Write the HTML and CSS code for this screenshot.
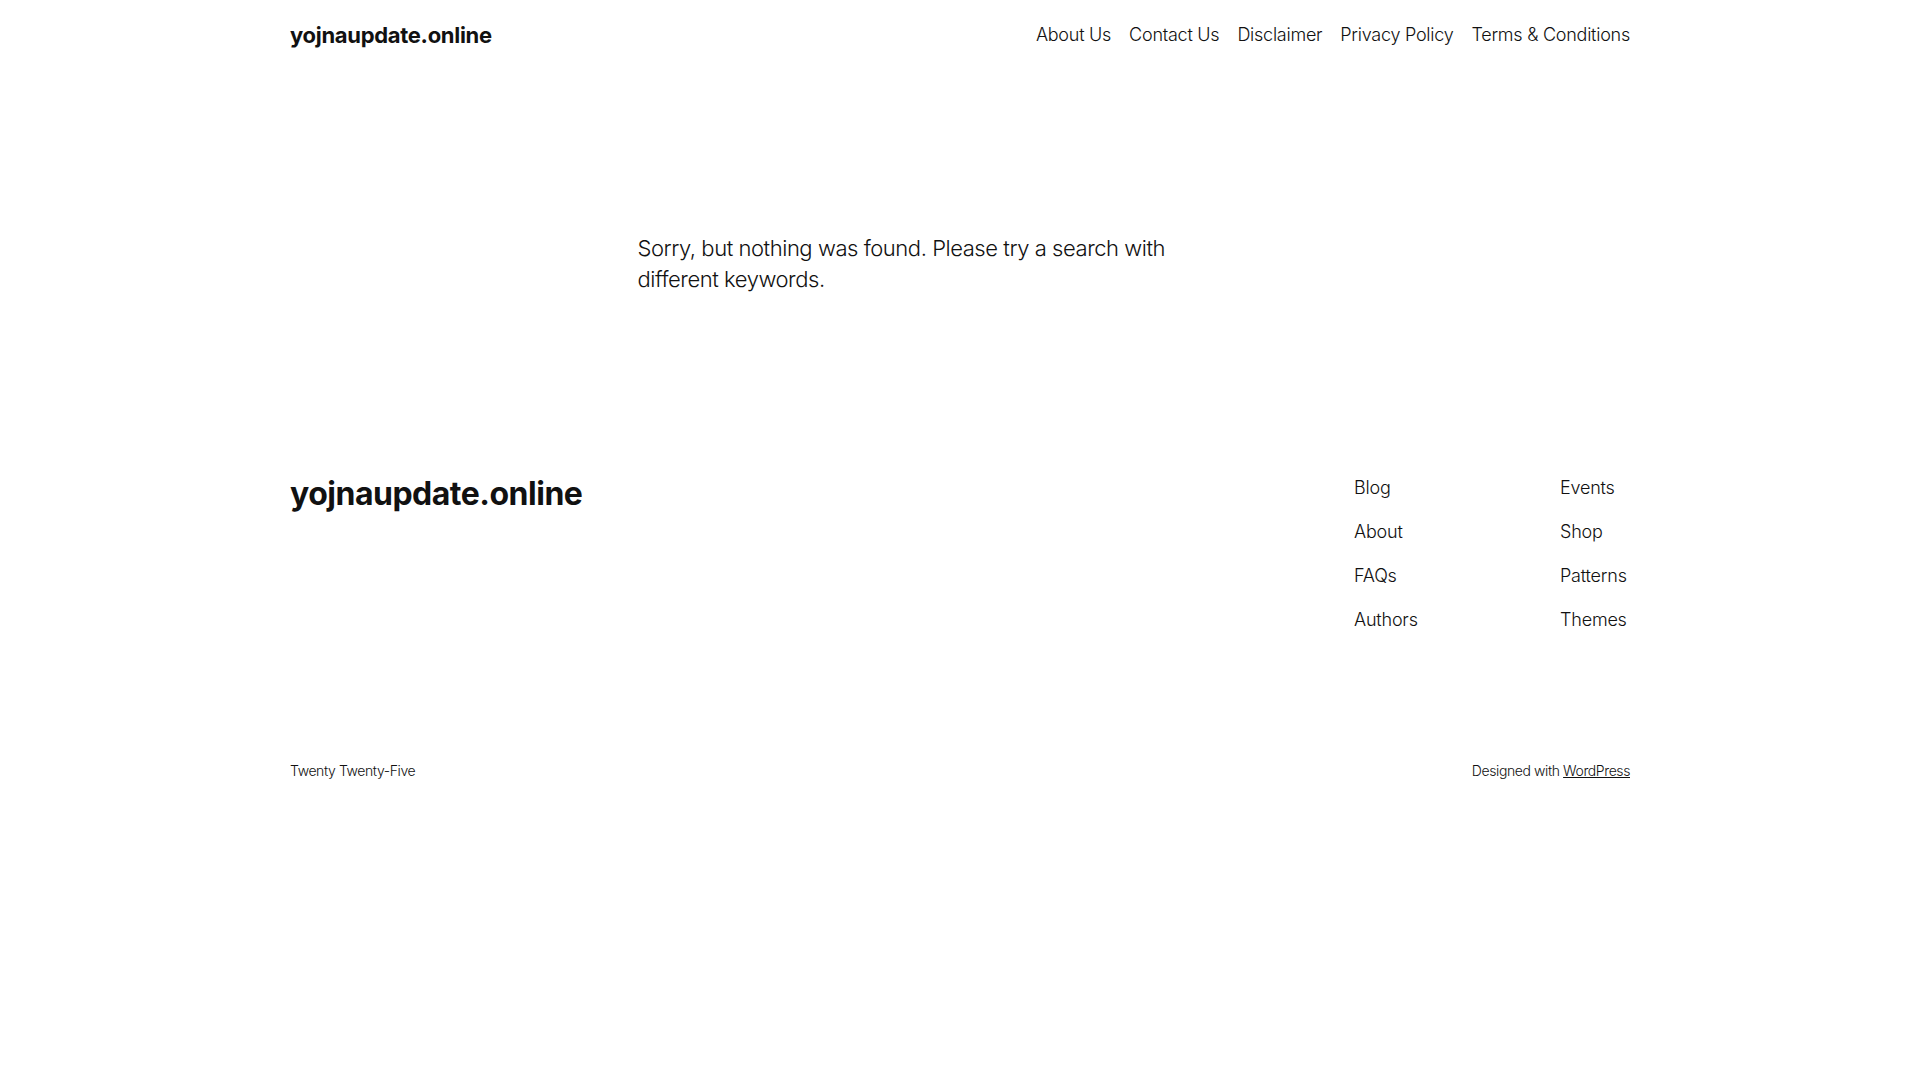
FILE: index.html
```html
<!DOCTYPE html>
<html lang="en">
<head>
<meta charset="utf-8">
<title>yojnaupdate.online</title>
<link rel="stylesheet" href="styles.css">
</head>
<body>
<header class="site-header">
  <a class="site-title" href="#">yojnaupdate.online</a>
  <nav class="main-nav">
    <a href="#">About Us</a>
    <a href="#">Contact Us</a>
    <a href="#">Disclaimer</a>
    <a href="#">Privacy Policy</a>
    <a href="#">Terms &amp; Conditions</a>
  </nav>
</header>
<main class="content">
  <p class="no-results">Sorry, but nothing was found. Please try a search with different keywords.</p>
</main>
<footer class="site-footer">
  <div class="footer-top">
    <a class="footer-title" href="#">yojnaupdate.online</a>
    <div class="footer-navs">
      <ul class="footer-col">
        <li><a href="#">Blog</a></li>
        <li><a href="#">About</a></li>
        <li><a href="#">FAQs</a></li>
        <li><a href="#">Authors</a></li>
      </ul>
      <ul class="footer-col">
        <li><a href="#">Events</a></li>
        <li><a href="#">Shop</a></li>
        <li><a href="#">Patterns</a></li>
        <li><a href="#">Themes</a></li>
      </ul>
    </div>
  </div>
  <div class="footer-bottom">
    <span>Twenty Twenty-Five</span>
    <span>Designed with <a class="wp-link" href="#">WordPress</a></span>
  </div>
</footer>
</body>
</html>
```
FILE: styles.css
```css
html, body {
  margin: 0;
  padding: 0;
  background: #ffffff;
}
body {
  font-family: Inter, "Noto Sans", sans-serif;
  color: #111111;
  font-weight: 300;
}
a {
  color: #111111;
  text-decoration: none;
}
.site-header {
  width: 1340px;
  margin: 0 auto;
  display: flex;
  justify-content: space-between;
  align-items: center;
  padding: 21px 0 19px;
}
.site-title {
  font-size: 22px;
  font-weight: 700;
  letter-spacing: -0.3px;
  line-height: 28px;
}
.main-nav {
  display: flex;
  gap: 18px;
  font-size: 18px;
  line-height: 28px;
  letter-spacing: -0.25px;
}
.content {
  width: 645px;
  margin: 0 auto;
  padding-top: 165px;
  padding-bottom: 179px;
}
.no-results {
  margin: 0;
  max-width: 560px;
  font-size: 22px;
  line-height: 31px;
  letter-spacing: -0.45px;
}
.site-footer {
  width: 1340px;
  margin: 0 auto;
}
.footer-top {
  display: flex;
  justify-content: space-between;
  align-items: flex-start;
}
.footer-title {
  font-size: 32px;
  font-weight: 700;
  letter-spacing: -0.5px;
  line-height: 40px;
}
.footer-navs {
  display: flex;
  gap: 0;
}
.footer-col {
  list-style: none;
  margin: 0;
  padding: 0;
  width: 206px;
  display: flex;
  flex-direction: column;
  gap: 17px;
  font-size: 18px;
  line-height: 27px;
  letter-spacing: -0.2px;
}
.footer-col:last-child {
  width: 70px;
}
.footer-bottom {
  display: flex;
  justify-content: space-between;
  align-items: center;
  margin-top: 128px;
  font-size: 14px;
  line-height: 20px;
  letter-spacing: -0.4px;
}
.wp-link {
  text-decoration: underline;
}
```
